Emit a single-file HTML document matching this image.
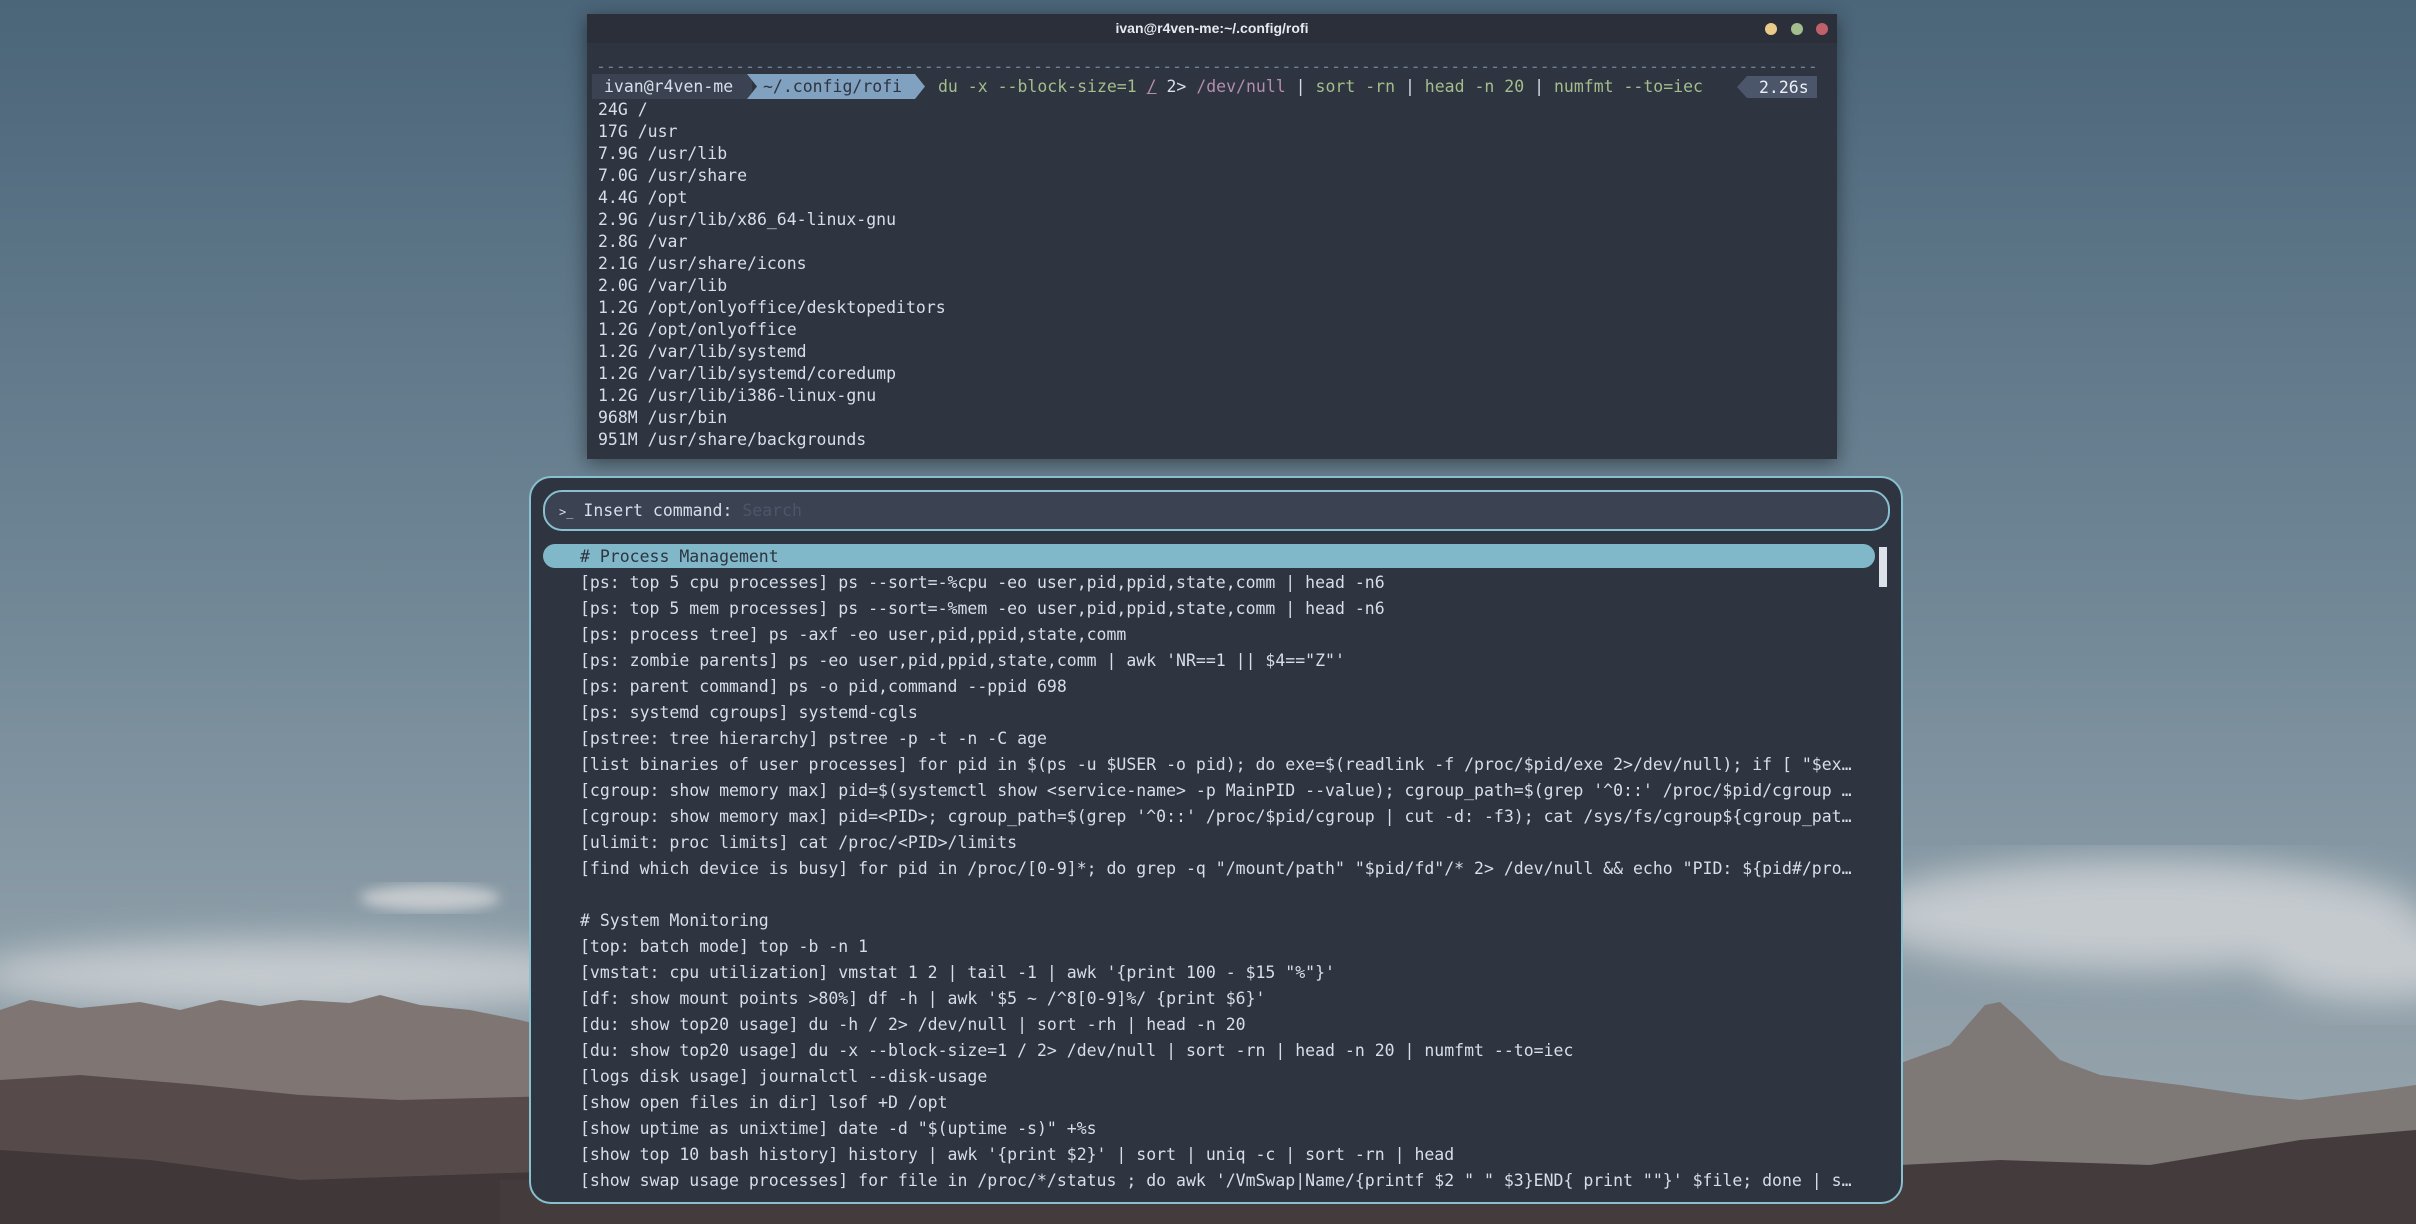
<!DOCTYPE html>
<html><head><meta charset="utf-8">
<style>
html,body{margin:0;padding:0;width:2416px;height:1224px;overflow:hidden;}
body{position:relative;font-family:"DejaVu Sans Mono","Liberation Mono",monospace;}
#bg{position:absolute;left:0;top:0;}
.term{position:absolute;left:587px;top:14px;width:1250px;height:445px;background:#2e3440;box-shadow:0 4px 18px rgba(0,0,0,.45);overflow:hidden;}
.tbar{position:absolute;left:0;top:0;width:100%;height:29px;background:#2a2f3a;color:#e5e9f0;font-family:"Liberation Sans",sans-serif;font-size:14px;font-weight:bold;text-align:center;line-height:29px;}
.dot{position:absolute;top:9px;width:12px;height:12px;border-radius:50%;}
.tl{position:absolute;left:11px;font-size:16.5px;line-height:22px;color:#d8dee9;white-space:pre;}
.seg{position:absolute;top:60px;height:25px;line-height:25px;font-size:16.5px;white-space:pre;}
.rofi{position:absolute;left:529px;top:476px;width:1370px;height:724px;background:#2e3440;border:2px solid #88c0d0;border-radius:22px;}
.inp{position:absolute;left:12px;top:12px;width:1343px;height:37px;background:#3b4252;border:2px solid #88c0d0;border-radius:19px;color:#d8dee9;font-size:16.5px;line-height:37px;white-space:pre;}
.sel{position:absolute;left:12px;top:66px;width:1332px;height:24px;background:#81b8c9;border-radius:12px;}
.sb{position:absolute;left:1348px;top:69px;width:8px;height:40px;background:#dde1ea;}
.list{position:absolute;left:49px;top:66px;width:1280px;}
.row{height:26px;line-height:26px;font-size:16.5px;color:#d8dee9;white-space:pre;overflow:hidden;text-overflow:ellipsis;}
.row.s{color:#2e3440;}
</style></head><body>
<svg id="bg" width="2416" height="1224" viewBox="0 0 2416 1224">
<defs>
<linearGradient id="sky" x1="0" y1="0" x2="0" y2="1">
<stop offset="0" stop-color="#4b6579"/><stop offset="0.45" stop-color="#6d8494"/><stop offset="0.75" stop-color="#8a9ba6"/><stop offset="1" stop-color="#9aa6ad"/>
</linearGradient>
<filter id="bl"><feGaussianBlur stdDeviation="18"/></filter>
<filter id="bl2"><feGaussianBlur stdDeviation="6"/></filter>
</defs>
<rect width="2416" height="1224" fill="url(#sky)"/>
<g filter="url(#bl)" fill="#cfd3d6" opacity="0.85">
<ellipse cx="300" cy="975" rx="330" ry="35"/>
<ellipse cx="2140" cy="915" rx="280" ry="55"/>
<ellipse cx="2380" cy="960" rx="120" ry="40"/>
</g>
<ellipse cx="430" cy="898" rx="70" ry="13" fill="#c4c9cd" filter="url(#bl2)"/>
<polygon fill="#7f7674" points="0,1010 30,1000 80,1008 140,1002 180,1010 220,1000 260,1006 300,1000 350,1003 380,995 420,1005 470,1010 520,1020 600,1040 600,1224 0,1224"/>
<polygon fill="#564b4a" points="0,1080 80,1075 200,1085 300,1095 400,1100 600,1095 600,1224 0,1224"/>
<polygon fill="#3f3738" points="0,1150 150,1160 300,1180 600,1170 600,1224 0,1224"/>
<polygon fill="#7e7877" points="1800,1100 1950,1045 1985,1005 2000,1002 2020,1020 2060,1060 2100,1075 2180,1085 2250,1095 2300,1100 2380,1090 2416,1085 2416,1224 1800,1224"/>
<polygon fill="#433b3c" points="1800,1170 2000,1160 2150,1165 2300,1140 2416,1130 2416,1224 1800,1224"/>
<rect x="500" y="1180" width="1916" height="44" fill="#433b3c"/>
</svg>

<div class="term">
<div class="tbar">ivan@r4ven-me:~/.config/rofi
<span class="dot" style="left:1178px;background:#ebcb8b"></span><span class="dot" style="left:1204px;background:#a3be8c"></span><span class="dot" style="left:1229px;background:#bf616a"></span></div>
<div class="tl" style="top:42px;left:9px;width:1220px;overflow:hidden;color:#6f7f95">--------------------------------------------------------------------------------------------------------------------------------</div>
<div class="seg" style="left:5px;width:160px;background:#3b4252;color:#d8dee9;padding-left:12px;box-sizing:border-box">ivan@r4ven-me</div>
<svg style="position:absolute;left:160px;top:60px" width="180" height="25"><polygon points="0,0 168,0 178,12.5 168,25 0,25 10,12.5" fill="#81a1c1"/></svg>
<div class="seg" style="left:176px;color:#2e3440">~/.config/rofi</div>
<div class="seg" style="left:351px;color:#a3be8c">du -x --block-size=1 <span style="color:#b48ead;text-decoration:underline">/</span> <span style="color:#d8dee9">2&gt;</span> <span style="color:#b48ead">/dev/null</span> <span style="color:#d8dee9">|</span> sort -rn <span style="color:#d8dee9">|</span> head -n 20 <span style="color:#d8dee9">|</span> numfmt --to=iec</div>
<svg style="position:absolute;left:1150px;top:62px" width="82" height="22"><polygon points="10,0 80,0 80,22 10,22 0,11" fill="#4c566a"/></svg>
<div class="seg" style="left:1172px;color:#eceff4;top:61px">2.26s</div>
<div class="tl" style="top:85px">24G /
17G /usr
7.9G /usr/lib
7.0G /usr/share
4.4G /opt
2.9G /usr/lib/x86_64-linux-gnu
2.8G /var
2.1G /usr/share/icons
2.0G /var/lib
1.2G /opt/onlyoffice/desktopeditors
1.2G /opt/onlyoffice
1.2G /var/lib/systemd
1.2G /var/lib/systemd/coredump
1.2G /usr/lib/i386-linux-gnu
968M /usr/bin
951M /usr/share/backgrounds</div>
</div>

<div class="rofi">
<div class="inp"><span style="font-size:12px;margin-left:14px">&gt;_</span> Insert command: <span style="color:#4c566a">Search</span></div>
<div class="sel"></div>
<div class="sb"></div>
<div class="list">
<div class="row s"># Process Management</div>
<div class="row">[ps: top 5 cpu processes] ps --sort=-%cpu -eo user,pid,ppid,state,comm | head -n6</div>
<div class="row">[ps: top 5 mem processes] ps --sort=-%mem -eo user,pid,ppid,state,comm | head -n6</div>
<div class="row">[ps: process tree] ps -axf -eo user,pid,ppid,state,comm</div>
<div class="row">[ps: zombie parents] ps -eo user,pid,ppid,state,comm | awk 'NR==1 || $4=="Z"'</div>
<div class="row">[ps: parent command] ps -o pid,command --ppid 698</div>
<div class="row">[ps: systemd cgroups] systemd-cgls</div>
<div class="row">[pstree: tree hierarchy] pstree -p -t -n -C age</div>
<div class="row">[list binaries of user processes] for pid in $(ps -u $USER -o pid); do exe=$(readlink -f /proc/$pid/exe 2&gt;/dev/null); if [ "$exe" ]; then echo</div>
<div class="row">[cgroup: show memory max] pid=$(systemctl show &lt;service-name&gt; -p MainPID --value); cgroup_path=$(grep '^0::' /proc/$pid/cgroup | cut</div>
<div class="row">[cgroup: show memory max] pid=&lt;PID&gt;; cgroup_path=$(grep '^0::' /proc/$pid/cgroup | cut -d: -f3); cat /sys/fs/cgroup${cgroup_path}/mem</div>
<div class="row">[ulimit: proc limits] cat /proc/&lt;PID&gt;/limits</div>
<div class="row">[find which device is busy] for pid in /proc/[0-9]*; do grep -q "/mount/path" "$pid/fd"/* 2&gt; /dev/null &amp;&amp; echo "PID: ${pid#/proc/}"</div>
<div class="row"> </div>
<div class="row"># System Monitoring</div>
<div class="row">[top: batch mode] top -b -n 1</div>
<div class="row">[vmstat: cpu utilization] vmstat 1 2 | tail -1 | awk '{print 100 - $15 "%"}'</div>
<div class="row">[df: show mount points &gt;80%] df -h | awk '$5 ~ /^8[0-9]%/ {print $6}'</div>
<div class="row">[du: show top20 usage] du -h / 2&gt; /dev/null | sort -rh | head -n 20</div>
<div class="row">[du: show top20 usage] du -x --block-size=1 / 2&gt; /dev/null | sort -rn | head -n 20 | numfmt --to=iec</div>
<div class="row">[logs disk usage] journalctl --disk-usage</div>
<div class="row">[show open files in dir] lsof +D /opt</div>
<div class="row">[show uptime as unixtime] date -d "$(uptime -s)" +%s</div>
<div class="row">[show top 10 bash history] history | awk '{print $2}' | sort | uniq -c | sort -rn | head</div>
<div class="row">[show swap usage processes] for file in /proc/*/status ; do awk '/VmSwap|Name/{printf $2 " " $3}END{ print ""}' $file; done | sort</div>
</div>
</div>
</body></html>
